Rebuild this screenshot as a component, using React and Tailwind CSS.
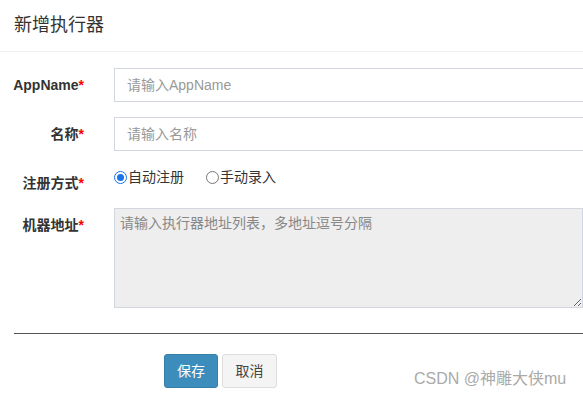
import React from "react";

const font = { fontFamily: '"Liberation Sans", "Noto Sans CJK SC", sans-serif' };

const Label = ({ children, className = "" }) => (
  <label className={`w-[84px] shrink-0 text-right text-[14px] font-bold leading-5 text-[#333] ${className}`}>
    {children}
    <span className="text-[#f00]">*</span>
  </label>
);

const Radio = ({ checked, children }) => (
  <label className="flex items-center text-[14px] leading-5 text-[#333]">
    <span className={`mr-[1px] flex h-[13px] w-[13px] items-center justify-center rounded-full border ${checked ? "border-[#1a73e8]" : "border-[#767676]"}`}>
      {checked && <span className="h-[7px] w-[7px] rounded-full bg-[#1a73e8]" />}
    </span>
    {children}
  </label>
);

export default function App() {
  return (
    <div className="relative h-[397px] w-[583px] overflow-hidden bg-white" style={font}>
      <div className="flex h-[52px] items-center border-b border-[#f0f0f0] px-[14px]">
        <h4 className="text-[18px] text-[#333]">新增执行器</h4>
      </div>

      <form className="pt-[16px]">
        <div className="mb-[15px] flex items-center">
          <Label>AppName</Label>
          <input
            placeholder="请输入AppName"
            className="ml-[30px] h-[34px] w-[500px] shrink-0 border border-[#d2d6de] px-3 text-[14px] placeholder:text-[#999]"
          />
        </div>
        <div className="mb-[15px] flex items-center">
          <Label>名称</Label>
          <input
            placeholder="请输入名称"
            className="ml-[30px] h-[34px] w-[500px] shrink-0 border border-[#d2d6de] px-3 text-[14px] placeholder:text-[#999]"
          />
        </div>
        <div className="mb-[15px] flex h-[27px] items-start">
          <Label className="pt-[7px]">注册方式</Label>
          <div className="ml-[30px] flex gap-[22px] pt-[1px]">
            <Radio checked>自动注册</Radio>
            <Radio>手动录入</Radio>
          </div>
        </div>
        <div className="flex items-start">
          <Label className="pt-[7px]">机器地址</Label>
          <textarea
            placeholder="请输入执行器地址列表，多地址逗号分隔"
            disabled
            className="ml-[30px] h-[100px] w-[469px] shrink-0 border border-[#d2d6de] bg-[#eee] px-[5px] py-[4px] text-[14px] placeholder:text-[#888]"
            style={{ resize: "both" }}
          />
        </div>
      </form>

      <div className="ml-[14px] mt-[25px] border-t border-[#555]" />

      <div className="mt-[20px] flex gap-[4px] pl-[164px]">
        <button className="h-[34px] w-[54px] rounded-[3px] border border-[#367fa9] bg-[#3c8dbc] text-[14px] text-white">保存</button>
        <button className="h-[34px] w-[55px] rounded-[3px] border border-[#ddd] bg-[#f4f4f4] text-[14px] text-[#444]">取消</button>
      </div>

      <div className="absolute left-[414px] top-[369px] text-[16px] leading-5 text-[#aaa]">CSDN @神雕大侠mu</div>
    </div>
  );
}
